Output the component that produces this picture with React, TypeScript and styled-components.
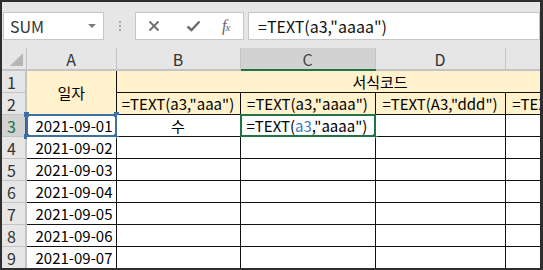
import styled, { createGlobalStyle } from "styled-components";

const GlobalStyle = createGlobalStyle`
  html, body {
    margin: 0;
    padding: 0;
    background: #ffffff;
    overflow: hidden;
  }
`;

const FONT = `"Noto Sans CJK KR", "Noto Sans", sans-serif`;
const GREEN = "#217346";
const REF_BLUE = "#3f6ea3";
const YELLOW = "#fff2cc";

const Frame = styled.div`
  width: 543px;
  height: 270px;
  box-sizing: border-box;
  border-style: solid;
  border-color: #2e2e2e;
  border-width: 2px 3px 2px 2px;
  background: #e6e6e6;
  overflow: hidden;
  display: flex;
  flex-direction: column;
  font-family: ${FONT};
`;

const Toolbar = styled.div`
  height: 46px;
  flex: none;
  box-sizing: border-box;
  padding: 10px 0 0 1px;
  display: flex;
  align-items: flex-start;
`;

const Box = styled.div<{ $width?: number }>`
  height: 28px;
  box-sizing: border-box;
  background: #ffffff;
  border: 1px solid #c6c6c6;
  display: flex;
  align-items: center;
  ${(p) => (p.$width ? `width: ${p.$width}px; flex: none;` : "flex: 1;")}
`;

const NameText = styled.span`
  flex: 1;
  padding-left: 6px;
  font-size: 16px;
  color: #333333;
`;

const DropArrow = styled.span`
  width: 0;
  height: 0;
  margin-right: 7px;
  border-left: 4px solid transparent;
  border-right: 4px solid transparent;
  border-top: 4px solid #7a7a7a;
`;

const Grip = styled.div`
  width: 31px;
  height: 28px;
  flex: none;
  display: flex;
  flex-direction: column;
  align-items: center;
  justify-content: center;
  gap: 2px;
`;

const GripDot = styled.span`
  width: 2px;
  height: 2px;
  background: #a8a8a8;
`;

const FxGroup = styled(Box)`
  padding-left: 12px;
  margin-right: 4px;
  gap: 0;
  & > :nth-child(2) {
    margin-left: 26px;
  }
  & > :nth-child(3) {
    margin-left: 21px;
  }
`;

const FxLabel = styled.span`
  font-family: "Liberation Serif", serif;
  font-style: italic;
  font-size: 16px;
  color: #666666;
  letter-spacing: -1px;
  small {
    font-size: 11px;
  }
`;

const FormulaText = styled.span`
  padding-left: 9px;
  font-size: 16px;
  color: #111111;
  white-space: nowrap;
`;

const SheetArea = styled.div`
  flex: 1;
  overflow: hidden;
`;

const SheetTable = styled.table`
  border-collapse: collapse;
  table-layout: fixed;
  width: 642px;
  font-family: ${FONT};
  font-size: 15px;
  background: #ffffff;
`;

const Row = styled.tr`
  height: 22px;
`;

const ColHead = styled.th<{ $active?: boolean }>`
  height: 20px;
  padding: 0;
  line-height: 1;
  font-weight: normal;
  font-size: 16px;
  color: ${(p) => (p.$active ? "#444444" : "#333333")};
  background: ${(p) => (p.$active ? "#d2d2d2" : "#e6e6e6")};
  border-left: 1px solid #c4c4c4;
  border-bottom: 2px solid ${(p) => (p.$active ? GREEN : "#c4c4c4")};
`;

const Corner = styled.th`
  padding: 0;
  background: #e6e6e6;
  border-bottom: 2px solid #c4c4c4;
  position: relative;
  &::after {
    content: "";
    position: absolute;
    right: 3px;
    bottom: 3px;
    border-left: 13px solid transparent;
    border-bottom: 13px solid #b5b5b5;
  }
`;

const RowHead = styled.th<{ $active?: boolean }>`
  height: 21px;
  padding: 0 4px 0 0;
  line-height: 1;
  font-weight: normal;
  font-size: 16px;
  color: ${(p) => (p.$active ? GREEN : "#333333")};
  background: ${(p) => (p.$active ? "#d2d2d2" : "#e6e6e6")};
  border-top: 1px solid #c4c4c4;
  border-right: 2px solid ${(p) => (p.$active ? GREEN : "#c4c4c4")};
  text-align: center;
`;

const Cell = styled.td<{ $fill?: boolean; $align?: "left" | "center" | "right" }>`
  position: relative;
  height: 21px;
  padding: 0 ${(p) => (p.$align === "left" ? "3px 0 6px" : "3px")};
  line-height: 1;
  border: 1px solid #111111;
  background: ${(p) => (p.$fill ? YELLOW : "#ffffff")};
  text-align: ${(p) => p.$align ?? "center"};
  color: #000000;
  white-space: nowrap;
  overflow: visible;
`;

const HeadCell = styled(Cell)`
  border-top-color: #c4c4c4;
`;

const Marker = styled.span<{ $color: string }>`
  position: absolute;
  top: -1px;
  left: -1px;
  right: -1px;
  bottom: -1px;
  border: 2px solid ${(p) => p.$color};
  pointer-events: none;
`;

const Handle = styled.span<{ $color: string; $pos: "tl" | "tr" | "bl" | "br" }>`
  position: absolute;
  width: 5px;
  height: 5px;
  background: ${(p) => p.$color};
  ${(p) => (p.$pos[0] === "t" ? "top: -4px;" : "bottom: -4px;")}
  ${(p) => (p.$pos[1] === "l" ? "left: -4px;" : "right: -4px;")}
`;

const RefText = styled.span`
  color: #3a7bc0;
`;

const dates = [
  "2021-09-02",
  "2021-09-03",
  "2021-09-04",
  "2021-09-05",
  "2021-09-06",
  "2021-09-07",
];

function CancelIcon() {
  return (
    <svg width="12" height="12" viewBox="0 0 12 12">
      <path d="M1.5 1.5 L10.5 10.5 M10.5 1.5 L1.5 10.5" stroke="#6e6e6e" strokeWidth="1.8" fill="none" />
    </svg>
  );
}

function EnterIcon() {
  return (
    <svg width="15" height="12" viewBox="0 0 15 12">
      <path d="M1.5 6.5 L5.5 10 L13.5 1.5" stroke="#6e6e6e" strokeWidth="2.4" fill="none" />
    </svg>
  );
}

export default function App() {
  return (
    <>
      <GlobalStyle />
      <Frame>
        <Toolbar>
          <Box $width={101}>
            <NameText>SUM</NameText>
            <DropArrow />
          </Box>
          <Grip>
            <GripDot />
            <GripDot />
            <GripDot />
          </Grip>
          <FxGroup $width={109}>
            <CancelIcon />
            <EnterIcon />
            <FxLabel>
              f<small>x</small>
            </FxLabel>
          </FxGroup>
          <Box>
            <FormulaText>=TEXT(a3,"aaaa")</FormulaText>
          </Box>
        </Toolbar>
        <SheetArea>
          <SheetTable>
            <colgroup>
              <col style={{ width: 24 }} />
              <col style={{ width: 90 }} />
              <col style={{ width: 124 }} />
              <col style={{ width: 135 }} />
              <col style={{ width: 130 }} />
              <col style={{ width: 139 }} />
            </colgroup>
            <thead>
              <Row>
                <Corner />
                <ColHead>A</ColHead>
                <ColHead>B</ColHead>
                <ColHead $active>C</ColHead>
                <ColHead>D</ColHead>
                <ColHead>E</ColHead>
              </Row>
            </thead>
            <tbody>
              <Row>
                <RowHead>1</RowHead>
                <HeadCell $fill rowSpan={2}>
                  일자
                </HeadCell>
                <HeadCell $fill colSpan={4}>
                  서식코드
                </HeadCell>
              </Row>
              <Row>
                <RowHead>2</RowHead>
                <Cell $fill>=TEXT(a3,"aaa")</Cell>
                <Cell $fill>=TEXT(a3,"aaaa")</Cell>
                <Cell $fill>=TEXT(A3,"ddd")</Cell>
                <Cell $fill>=TEXT(A3,"dddd")</Cell>
              </Row>
              <Row>
                <RowHead $active>3</RowHead>
                <Cell $align="right">
                  2021-09-01
                  <Marker $color={REF_BLUE}>
                    <Handle $color={REF_BLUE} $pos="tl" />
                    <Handle $color={REF_BLUE} $pos="tr" />
                    <Handle $color={REF_BLUE} $pos="bl" />
                    <Handle $color={REF_BLUE} $pos="br" />
                  </Marker>
                </Cell>
                <Cell>수</Cell>
                <Cell $align="left">
                  =TEXT(<RefText>a3</RefText>,"aaaa")
                  <Marker $color={GREEN}>
                    <Handle $color={GREEN} $pos="br" />
                  </Marker>
                </Cell>
                <Cell />
                <Cell />
              </Row>
              {dates.map((d, i) => (
                <Row key={d}>
                  <RowHead>{i + 4}</RowHead>
                  <Cell $align="right">{d}</Cell>
                  <Cell />
                  <Cell />
                  <Cell />
                  <Cell />
                </Row>
              ))}
            </tbody>
          </SheetTable>
        </SheetArea>
      </Frame>
    </>
  );
}
